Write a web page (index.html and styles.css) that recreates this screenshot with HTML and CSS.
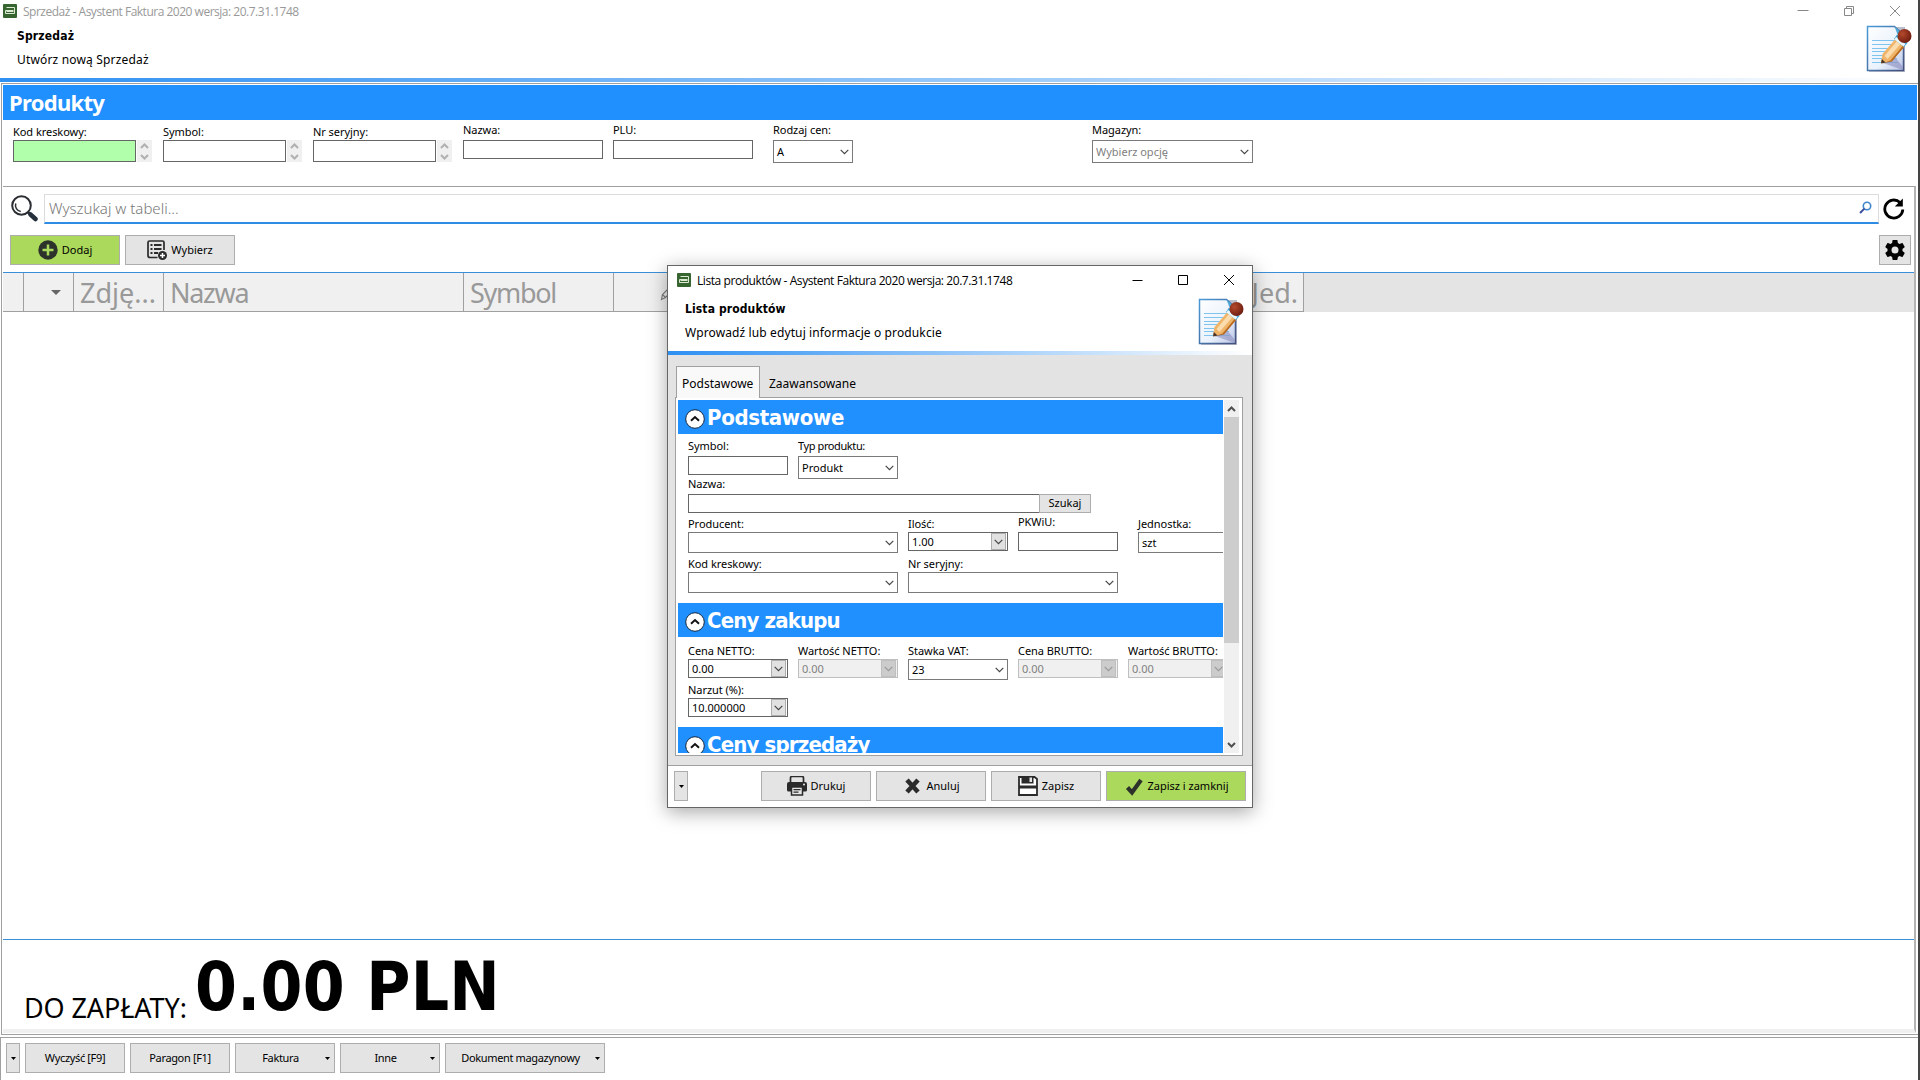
FILE: index.html
```html
<!DOCTYPE html>
<html lang="pl">
<head>
    <meta charset="UTF-8">
    <meta name="viewport" content="width=device-width, initial-scale=1.0">
    <title>Sprzedaż - Asystent Faktura 2020</title>
    <link rel="stylesheet" href="styles.css">
</head>
<body>
    <!-- shared icons -->
    <svg class="sprite" width="0" height="0">
        <defs>
            <linearGradient id="paper" x1="0" y1="0" x2="1" y2="1">
                <stop offset="0" stop-color="#ffffff"/>
                <stop offset="0.6" stop-color="#eaf2fc"/>
                <stop offset="1" stop-color="#b9c4e6"/>
            </linearGradient>
            <linearGradient id="edge" x1="0" y1="0" x2="1" y2="1">
                <stop offset="0" stop-color="#4a9ad8"/>
                <stop offset="1" stop-color="#44507c"/>
            </linearGradient>
            <radialGradient id="rubber" cx="0.35" cy="0.35" r="0.7">
                <stop offset="0" stop-color="#b4492c"/>
                <stop offset="1" stop-color="#6e1d10"/>
            </radialGradient>
        </defs>
        <symbol id="app" viewBox="0 0 14 14">
            <rect width="14" height="14" rx="1" fill="#37652f"/>
            <path d="M3.5 3.5h8v6h-9v-3h8M3.5 7.5h7" fill="none" stroke="#dcead4" stroke-width="1"/>
        </symbol>
        <symbol id="doc" viewBox="0 0 48 48">
            <path d="M3 2h36v45H3z" fill="#8d93ab" opacity="0.6"/>
            <path d="M1.500 1.500h27l9 8v36h-36z" fill="url(#paper)" stroke="url(#edge)" stroke-width="1.500"/>
            <path d="M6 15.500h25M6 19.500h25M6 23.500h24M6 26.500h22M6 30.500h25M6 33.500h25M6 37.500h26" stroke="#7fc4ee" stroke-width="1.200"/>
            <path d="M17 38l12-6 8 10v3z" fill="#8d8fc0" opacity="0.6"/>
            <path d="M28.500 1.500l9 8h-6z" fill="#4fa9d8"/>
            <path d="M15 38l1.500-9L29.500 14l9 7.500L25 36z" fill="#f0b468"/>
            <path d="M18.500 31L31 16l3.500 3-13 15z" fill="#fbdcae"/>
            <path d="M24.500 35.500L37 20.500l1.500 1L26 36.500l-10 2z" fill="#b86a20"/>
            <path d="M15 38.500l0.800-4.500 3.700 3.500z" fill="#4a3426"/>
            <path d="M31 9.500L28 14l10 8 3.500-4z" fill="#3fa6dc"/>
            <path d="M30 12l-1.500 2.500 9 7 2-2.500z" fill="#eaf7fc"/>
            <circle cx="38.500" cy="11" r="7" fill="url(#rubber)"/>
        </symbol>
        <symbol id="chev" viewBox="0 0 9 6">
            <path d="M0.700 0.900L4.500 4.700L8.300 0.900" fill="none" stroke="currentColor" stroke-width="1.200"/>
        </symbol>
        <symbol id="chev-bold" viewBox="0 0 9 6">
            <path d="M1 1L4.500 4.500L8 1" fill="none" stroke="currentColor" stroke-width="2"/>
        </symbol>
        <symbol id="caret" viewBox="0 0 5 3">
            <path d="M0 0h5L2.500 3z" fill="#000"/>
        </symbol>
        <symbol id="up" viewBox="0 0 20 20">
            <circle cx="10" cy="10" r="9.300" fill="#fff" stroke="#12263c" stroke-width="1"/>
            <path d="M6 11.700L10 8l4 3.700" fill="none" stroke="#111" stroke-width="2"/>
        </symbol>
    </svg>

    <div class="window">
        <div class="titlebar">
            <svg class="app-icon"><use href="#app"/></svg>
            <span class="title">Sprzedaż - Asystent Faktura 2020 wersja: 20.7.31.1748</span>
            <div class="win-buttons">
                <svg viewBox="0 0 12 12"><path d="M0.500 5.500h11"/></svg>
                <svg viewBox="0 0 12 12"><path d="M1.500 3.500h7v7h-7zM3.500 3v-1.500h7v7H9"/></svg>
                <svg viewBox="0 0 12 12"><path d="M1 1l10 10M11 1L1 11"/></svg>
            </div>
        </div>
        <div class="header">
            <h1>Sprzedaż</h1>
            <p>Utwórz nową Sprzedaż</p>
            <svg class="doc-icon"><use href="#doc"/></svg>
        </div>
        <div class="line"></div>

        <div class="main">
            <h2 class="banner">Produkty</h2>
            <div class="filters">
                <div class="field low">
                    <label>Kod kreskowy:</label>
                    <div class="spin-row">
                        <div class="box code green"></div>
                        <div class="spinner"><svg class="flip"><use href="#chev-bold"/></svg><svg><use href="#chev-bold"/></svg></div>
                    </div>
                </div>
                <div class="field low">
                    <label>Symbol:</label>
                    <div class="spin-row">
                        <div class="box code"></div>
                        <div class="spinner"><svg class="flip"><use href="#chev-bold"/></svg><svg><use href="#chev-bold"/></svg></div>
                    </div>
                </div>
                <div class="field low">
                    <label>Nr seryjny:</label>
                    <div class="spin-row">
                        <div class="box code"></div>
                        <div class="spinner"><svg class="flip"><use href="#chev-bold"/></svg><svg><use href="#chev-bold"/></svg></div>
                    </div>
                </div>
                <div class="field">
                    <label>Nazwa:</label>
                    <div class="box w140"></div>
                </div>
                <div class="field">
                    <label>PLU:</label>
                    <div class="box w140"></div>
                </div>
                <div class="field price">
                    <label>Rodzaj cen:</label>
                    <div class="box select">A<svg><use href="#chev"/></svg></div>
                </div>
                <div class="field store">
                    <label>Magazyn:</label>
                    <div class="box select muted">Wybierz opcję<svg><use href="#chev"/></svg></div>
                </div>
            </div>

            <div class="grid-panel">
                <div class="search-row">
                    <svg class="lens" viewBox="0 0 27 27">
                        <circle cx="10.500" cy="10.500" r="9.300" fill="none" stroke="#2b2f33" stroke-width="2"/>
                        <path d="M4.800 8.500a6 6 0 0 0 5 8" fill="none" stroke="#2b2f33" stroke-width="1.500"/>
                        <path d="M16.800 17l3 3" stroke="#2b2f33" stroke-width="2.500"/>
                        <path d="M19.500 19.500l5 4.500" stroke="#25303a" stroke-width="4.500" stroke-linecap="round"/>
                    </svg>
                    <div class="search">
                        <span>Wyszukaj w tabeli...</span>
                        <svg viewBox="0 0 13 13">
                            <circle cx="8" cy="5" r="3.700" fill="none" stroke="#3f86cc" stroke-width="1.600"/>
                            <path d="M5.400 7.600L1 12" stroke="#3c4f9c" stroke-width="2"/>
                        </svg>
                    </div>
                    <svg class="refresh" viewBox="0 0 22 22">
                        <path d="M17 4.500A9 9 0 1 0 19.800 11.500" fill="none" stroke="#000" stroke-width="2.800"/>
                        <path d="M19.800 0.500v8h-8z" fill="#000"/>
                    </svg>
                </div>
                <div class="tools">
                    <button class="btn wide green-btn">
                        <svg width="20" height="20" viewBox="0 0 20 20"><circle cx="10" cy="10" r="9.700" fill="#2d332b"/><path d="M10 4.500v11M4.500 10h11" stroke="#a9d95d" stroke-width="2.500"/></svg>
                        <span>Dodaj</span>
                    </button>
                    <button class="btn wide">
                        <svg width="20" height="20" viewBox="0 0 20 20">
                            <path d="M10.500 17.500H3a2 2 0 0 1-2-2V2.500a1.500 1.500 0 0 1 1.500-1.500h13a1.500 1.500 0 0 1 1.500 1.500V10" fill="none" stroke="#2b2b2b" stroke-width="1.700"/>
                            <path d="M3.500 5h2M3.500 9h2M3.500 13h2M7 5h7.500M7 9h7.500M7 13h4" stroke="#2b2b2b" stroke-width="2"/>
                            <circle cx="15.500" cy="15.500" r="4.500" fill="#2b2b2b"/>
                            <path d="M15.500 13v5M13 15.500h5" stroke="#fff" stroke-width="1.500"/>
                        </svg>
                        <span>Wybierz</span>
                    </button>
                    <button class="btn gear">
                        <svg width="20" height="20" viewBox="2 2 20 20"><path d="M19.430 12.980c.04-.32.07-.64.07-.98s-.03-.66-.07-.98l2.110-1.650c.19-.15.24-.42.12-.64l-2-3.460c-.12-.22-.39-.3-.61-.22l-2.490 1c-.52-.4-1.080-.73-1.690-.98l-.38-2.650C14.460 2.180 14.250 2 14 2h-4c-.25 0-.46.18-.49.42l-.38 2.650c-.61.25-1.170.59-1.690.98l-2.490-1c-.23-.09-.49 0-.61.22l-2 3.460c-.13.22-.07.49.12.64l2.110 1.650c-.04.32-.07.65-.07.98s.03.66.07.98l-2.110 1.650c-.19.15-.24.42-.12.64l2 3.460c.12.22.39.3.61.22l2.490-1c.52.4 1.080.73 1.690.98l.38 2.650c.03.24.24.42.49.42h4c.25 0 .46-.18.49-.42l.38-2.650c.61-.25 1.170-.59 1.690-.98l2.490 1c.23.09.49 0 .61-.22l2-3.460c.12-.22.07-.49-.12-.64zM12 15.500a3.500 3.500 0 1 1 0-7 3.500 3.500 0 0 1 0 7z"/></svg>
                    </button>
                </div>
                <div class="thead">
                    <div class="th c0"></div>
                    <div class="th c1"><i></i></div>
                    <div class="th c2">Zdję...</div>
                    <div class="th c3">Nazwa</div>
                    <div class="th c4">Symbol</div>
                    <div class="th c5"><svg width="14" height="14" viewBox="0 0 14 14"><path d="M1.500 12.500l1-5 6-6 3 3-6 6zM2.500 7.500l3 3" fill="none" stroke="#808080" stroke-width="1.200"/></svg></div>
                    <div class="th c6">Jed.</div>
                </div>
                <div class="tbody"></div>
                <div class="total">
                    <span class="total-label">DO ZAPŁATY:</span>
                    <span class="total-value">0.00 PLN</span>
                </div>
            </div>
        </div>

        <div class="actions">
            <button class="btn more"><svg width="5" height="3"><use href="#caret"/></svg></button>
            <button class="btn"><span>Wyczyść [F9]</span></button>
            <button class="btn"><span>Paragon [F1]</span></button>
            <button class="btn drop"><span>Faktura</span><svg width="5" height="3"><use href="#caret"/></svg></button>
            <button class="btn drop"><span>Inne</span><svg width="5" height="3"><use href="#caret"/></svg></button>
            <button class="btn drop long"><span>Dokument magazynowy</span><svg width="5" height="3"><use href="#caret"/></svg></button>
        </div>
    </div>

    <div class="dialog">
        <div class="titlebar">
            <svg class="app-icon"><use href="#app"/></svg>
            <span class="title">Lista produktów - Asystent Faktura 2020 wersja: 20.7.31.1748</span>
            <div class="win-buttons">
                <svg viewBox="0 0 12 12"><path d="M1.500 6.500h10"/></svg>
                <svg viewBox="0 0 12 12"><path d="M1.500 1.500h9v9h-9z"/></svg>
                <svg viewBox="0 0 12 12"><path d="M1 1l10 10M11 1L1 11"/></svg>
            </div>
        </div>
        <div class="header">
            <h1>Lista produktów</h1>
            <p>Wprowadź lub edytuj informacje o produkcie</p>
            <svg class="doc-icon"><use href="#doc"/></svg>
        </div>
        <div class="line"></div>

        <div class="dialog-body">
            <div class="tabs">
                <div class="tab active">Podstawowe</div>
                <div class="tab">Zaawansowane</div>
            </div>
            <div class="pane">
                <div class="form">
                    <h2 class="section"><svg><use href="#up"/></svg>Podstawowe</h2>
                    <div class="row r1">
                        <div class="field"><label>Symbol:</label><div class="box"></div></div>
                        <div class="field type"><label>Typ produktu:</label><div class="box select tall">Produkt<svg><use href="#chev"/></svg></div></div>
                    </div>
                    <div class="row r2">
                        <div class="field name"><label>Nazwa:</label><div class="box"></div></div>
                        <button class="btn find"><span>Szukaj</span></button>
                    </div>
                    <div class="row r3">
                        <div class="field low w210"><label>Producent:</label><div class="box select"><svg><use href="#chev"/></svg></div></div>
                        <div class="field low"><label>Ilość:</label><div class="box calc">1.00<b><svg><use href="#chev"/></svg></b></div></div>
                        <div class="field"><label>PKWiU:</label><div class="box"></div></div>
                        <div class="field low unit"><label>Jednostka:</label><div class="box select">szt</div></div>
                    </div>
                    <div class="row r4">
                        <div class="field low w210"><label>Kod kreskowy:</label><div class="box select"><svg><use href="#chev"/></svg></div></div>
                        <div class="field low w210"><label>Nr seryjny:</label><div class="box select"><svg><use href="#chev"/></svg></div></div>
                    </div>
                    <h2 class="section narrow"><svg><use href="#up"/></svg>Ceny zakupu</h2>
                    <div class="row r5">
                        <div class="field low"><label>Cena NETTO:</label><div class="box calc">0.00<b><svg><use href="#chev"/></svg></b></div></div>
                        <div class="field low"><label>Wartość NETTO:</label><div class="box calc off">0.00<b><svg><use href="#chev"/></svg></b></div></div>
                        <div class="field low"><label>Stawka VAT:</label><div class="box select">23<svg><use href="#chev"/></svg></div></div>
                        <div class="field low"><label>Cena BRUTTO:</label><div class="box calc off">0.00<b><svg><use href="#chev"/></svg></b></div></div>
                        <div class="field low"><label>Wartość BRUTTO:</label><div class="box calc off">0.00<b><svg><use href="#chev"/></svg></b></div></div>
                    </div>
                    <div class="row r6">
                        <div class="field low"><label>Narzut (%):</label><div class="box calc">10.000000<b><svg><use href="#chev"/></svg></b></div></div>
                    </div>
                    <h2 class="section narrow"><svg><use href="#up"/></svg>Ceny sprzedaży</h2>
                </div>
                <div class="scrollbar">
                    <svg class="flip"><use href="#chev-bold"/></svg>
                    <div class="thumb"></div>
                    <svg><use href="#chev-bold"/></svg>
                </div>
            </div>
        </div>

        <div class="dialog-footer">
            <button class="btn more"><svg width="5" height="3"><use href="#caret"/></svg></button>
            <button class="btn wide first">
                <svg width="20" height="20" viewBox="0 0 20 20">
                    <path d="M3.500 6V2a1.500 1.500 0 0 1 1.500-1.500h10a1.500 1.500 0 0 1 1.500 1.500v4" fill="none" stroke="#2b2b2b" stroke-width="1.700"/>
                    <path d="M2 6h16a2 2 0 0 1 2 2v6a1.500 1.500 0 0 1-1.500 1.500h-17A1.500 1.500 0 0 1 0 14V8a2 2 0 0 1 2-2z" fill="#2b2b2b"/>
                    <path d="M4.500 11h11v8h-11z" fill="#e6e6e6" stroke="#2b2b2b" stroke-width="1.500"/>
                    <path d="M6.500 13.700h7M6.500 16.200h5" stroke="#2b2b2b" stroke-width="1.200"/>
                    <circle cx="17" cy="8.500" r="0.900" fill="#fff"/>
                </svg>
                <span>Drukuj</span>
            </button>
            <button class="btn wide">
                <svg width="20" height="20" viewBox="0 0 20 20"><path d="M5 4l11 12M16 4l-11 12" stroke="#2b2b2b" stroke-width="4.600"/></svg>
                <span>Anuluj</span>
            </button>
            <button class="btn wide">
                <svg width="20" height="20" viewBox="0 0 20 20">
                    <path d="M1 1h15.500L19 3v16H1z" fill="#fff" stroke="#2b2b2b" stroke-width="1.800"/>
                    <path d="M3.500 0.500h12v7h-12zM1 9.500h18v3H1z" fill="#2b2b2b"/>
                    <path d="M11.500 1.500h2.500v4.500h-2.500z" fill="#e6e6e6"/>
                </svg>
                <span>Zapisz</span>
            </button>
            <button class="btn save green-btn">
                <svg width="20" height="20" viewBox="0 0 20 20"><path d="M4.500 11.500l4.500 5L18 4" fill="none" stroke="#2d332b" stroke-width="4.200"/></svg>
                <span>Zapisz i zamknij</span>
            </button>
        </div>
    </div>
</body>
</html>
```

FILE: styles.css
```css
* {
    box-sizing: border-box;
}

body {
    margin: 0;
    height: 1080px;
    background-color: #444;
    font-family: "Noto Sans", "Open Sans", sans-serif;
    font-size: 11px;
    color: #000;
    overflow: hidden;
}

h1, h2, p {
    margin: 0;
}

svg {
    display: block;
    flex: none;
}

.sprite {
    position: absolute;
}

.flip {
    transform: rotate(180deg);
}

.window {
    width: 1918px;
    height: 1080px;
    background-color: #fff;
    display: flex;
    flex-direction: column;
}

/* title bars */
.titlebar {
    display: flex;
    align-items: center;
    height: 22px;
    padding-left: 3px;
    color: #999;
    font-family: "Open Sans", "Noto Sans", sans-serif;
    font-size: 12px;
}

.app-icon {
    width: 14px;
    height: 14px;
    margin-right: 6px;
}

.title {
    letter-spacing: -0.49px;
}

.win-buttons {
    display: flex;
    gap: 34px;
    margin-left: auto;
    margin-right: 17px;
}

.win-buttons svg {
    width: 12px;
    height: 12px;
    fill: none;
    stroke: #888;
    stroke-width: 1;
}

.header {
    display: grid;
    grid-template-columns: 1fr 48px;
    grid-template-rows: 24px 22px;
    align-items: center;
    height: 56px;
    padding: 2px 4px 0 17px;
    font-size: 12px;
    letter-spacing: 0.17px;
}

.header h1 {
    font-family: "DejaVu Sans Condensed", "DejaVu Sans", sans-serif;
    font-stretch: condensed;
    font-size: 12px;
}

.header .doc-icon {
    width: 48px;
    height: 48px;
    margin-top: 3px;
    grid-column: 2;
    grid-row: 1 / 3;
}

.line {
    height: 4px;
    background: linear-gradient(to right, #2e90f2, #ffffff);
}

/* product panel */
.main {
    flex: 1;
    display: flex;
    flex-direction: column;
    margin: 1px 0 0 1px;
    border: 1px solid #a0a0a0;
    border-right: 0;
    padding: 1px;
}

.banner {
    height: 35px;
    padding-left: 6px;
    background-color: #2190ff;
    color: #fff;
    font-size: 22px;
    line-height: 35px;
    letter-spacing: -0.7px;
}

.filters {
    display: flex;
    height: 66px;
    padding: 3px 0 0 10px;
}

.field label {
    display: block;
    height: 14px;
    line-height: 14px;
    margin-bottom: 3px;
    letter-spacing: -0.05px;
    white-space: nowrap;
}

.field.low label {
    padding-top: 2px;
    height: 16px;
    margin-bottom: 1px;
}

.box {
    height: 19px;
    border: 1px solid #666;
    background-color: #fff;
}

.code {
    width: 123px;
    height: 22px;
}

.green {
    background-color: #b2ffab;
}

.spin-row {
    display: flex;
    gap: 1px;
    width: 150px;
}

.spinner {
    display: flex;
    flex-direction: column;
    align-items: center;
    justify-content: space-around;
    width: 15px;
    height: 22px;
    background-color: #f0f0f0;
    color: #b0b0b0;
}

.spinner svg {
    width: 9px;
    height: 6px;
}

.w140 {
    width: 140px;
    margin-right: 10px;
}

.select {
    display: flex;
    align-items: center;
    justify-content: space-between;
    height: 21px;
    padding: 0 3px;
    border-color: #7a7a7a;
}

.select svg {
    width: 9px;
    height: 6px;
    margin-left: auto;
    color: #444;
}

.filters .select {
    height: 23px;
}

.price {
    width: 80px;
    margin-left: 10px;
}

.store {
    width: 161px;
    margin-left: 239px;
}

.muted {
    color: #808080;
}

.grid-panel {
    flex: 1;
    display: flex;
    flex-direction: column;
    margin-right: 1px;
    border-top: 1px solid #a0a0a0;
    border-right: 2px solid #b4b4b4;
    border-bottom: 4px solid #f0f0f0;
}

.search-row {
    display: flex;
    padding: 7px 9px 0 8px;
}

.lens {
    width: 27px;
    height: 27px;
    margin: 1px 6px 0 0;
}

.search {
    flex: 1;
    display: flex;
    align-items: center;
    justify-content: space-between;
    height: 30px;
    padding: 0 6px 2px 4px;
    border: 1px solid #dcdcdc;
    border-bottom: 2px solid #2f8ce4;
    color: #777;
    font-size: 15px;
    font-weight: 300;
}

.search svg {
    width: 13px;
    height: 13px;
}

.refresh {
    width: 22px;
    height: 22px;
    margin: 4px 0 0 4px;
}

.tools {
    display: flex;
    gap: 5px;
    padding: 11px 3px 7px 7px;
}

.btn {
    display: flex;
    align-items: center;
    justify-content: center;
    width: 100px;
    height: 30px;
    padding: 0;
    border: 1px solid #adadad;
    background-color: #e4e4e4;
    font-family: inherit;
    font-size: 11px;
    color: #000;
    white-space: nowrap;
}

.btn span {
    padding-bottom: 2px;
}

.wide {
    width: 110px;
    gap: 4px;
}

.green-btn {
    background-color: #abd95c;
}

.gear {
    width: 32px;
    margin-left: auto;
}

.thead {
    display: flex;
    height: 40px;
    border-top: 1px solid #3b8fd8;
    background-color: #e4e4e4;
}

.th {
    border-right: 1px solid #a0a0a0;
    border-bottom: 1px solid #a0a0a0;
    background-color: #f0f0f0;
    color: #999;
    padding-left: 6px;
    font-size: 27px;
    line-height: 40px;
    letter-spacing: -1.3px;
    white-space: nowrap;
    overflow: hidden;
}

.c0 { width: 21px; }
.c1 { width: 50px; }
.c2 { width: 90px; letter-spacing: 0; }
.c3 { width: 300px; }
.c4 { width: 150px; }
.c5 { width: 90px; }
.c6 { width: 600px; text-align: right; padding-right: 5px; letter-spacing: 0; }

.c1 i {
    display: block;
    width: 0;
    margin: 17px 0 0 21px;
    border: 5px solid transparent;
    border-top-color: #666;
    border-bottom: 0;
}

.c5 svg {
    margin: 14px 0 0 40px;
}

.tbody {
    flex: 1;
}

.total {
    display: flex;
    align-items: flex-start;
    height: 90px;
    padding-left: 21px;
    border-top: 1px solid #3b8fd8;
}

.total-label {
    width: 171px;
    margin-top: 49px;
    font-size: 27px;
    line-height: 37px;
    letter-spacing: -0.1px;
    white-space: nowrap;
}

.total-value {
    margin-top: 8px;
    font-family: "DejaVu Sans Condensed", "DejaVu Sans", sans-serif;
    font-stretch: condensed;
    font-weight: bold;
    font-size: 67px;
    line-height: 78px;
    letter-spacing: 0.3px;
}

.actions {
    display: flex;
    gap: 5px;
    height: 43px;
    padding: 5px 0 0 5px;
    border-top: 1px solid #a0a0a0;
    border-left: 1px solid #a0a0a0;
    margin-top: 2px;
    letter-spacing: -0.35px;
}

.actions .btn {
    letter-spacing: -0.35px;
}

.more {
    width: 14px;
}

.actions .more {
    width: 14px;
}

.drop {
    padding-right: 4px;
}

.drop span {
    flex: 1;
}

.actions .long {
    width: 160px;
}

/* product dialog */
.dialog {
    position: absolute;
    left: 667px;
    top: 265px;
    width: 586px;
    height: 543px;
    border: 1px solid #666;
    background-color: #fff;
    box-shadow: 0 4px 18px rgba(0, 0, 0, 0.35);
    display: flex;
    flex-direction: column;
}

.dialog .titlebar {
    height: 30px;
    padding: 0 0 2px 9px;
    color: #000;
}

.dialog .title {
    letter-spacing: -0.43px;
}

.dialog .win-buttons svg {
    stroke: #000;
}

.dialog .header {
    height: 55px;
    padding: 1px 6px 0 17px;
    letter-spacing: 0.12px;
}

.dialog-body {
    height: 410px;
    padding: 11px 9px 0 7px;
    background-color: #e3e3e3;
}

.tabs {
    display: flex;
    height: 31px;
    padding-left: 1px;
    font-size: 12px;
}

.tab {
    height: 31px;
    padding: 0 9px;
    line-height: 36px;
}

.tab.active {
    width: 84px;
    height: 32px;
    padding: 0 5px;
    border: 1px solid #a0a0a0;
    border-bottom: 0;
    background-color: #f9f9f9;
    line-height: 34px;
    z-index: 1;
}

.pane {
    display: flex;
    gap: 1px;
    height: 359px;
    padding: 2px 3px 2px 2px;
    border: 1px solid #a0a0a0;
    background-color: #fff;
}

.form {
    width: 545px;
    overflow: hidden;
}

.section {
    display: flex;
    align-items: center;
    gap: 2px;
    height: 34px;
    padding-left: 7px;
    background-color: #2190ff;
    color: #fff;
    font-family: "DejaVu Sans Condensed", "DejaVu Sans", sans-serif;
    font-stretch: condensed;
    font-size: 22px;
    letter-spacing: -0.35px;
}

.narrow {
    letter-spacing: -0.85px;
}

.section svg {
    width: 20px;
    height: 20px;
    margin-top: 4px;
}

.row {
    display: flex;
    gap: 10px;
    padding-left: 10px;
}

.row .field {
    flex: none;
    width: 100px;
}

.row .w210 {
    width: 210px;
}

.row .name {
    width: 352px;
}

.row .unit {
    margin-left: 10px;
}

.row .type label {
    letter-spacing: -0.4px;
}

.r1 { height: 43px; padding-top: 5px; }
.r2 { height: 38px; gap: 0; }
.r3 { height: 40px; }
.r4 { height: 48px; }
.r5 { height: 46px; padding-top: 5px; }
.r6 { height: 44px; }

.r6 .field.low label {
    height: 14px;
    padding-top: 0;
}

.tall {
    height: 23px;
}

.find {
    width: 52px;
    height: 19px;
    margin: 17px 0 0 -1px;
}

.calc {
    display: flex;
    align-items: center;
    justify-content: space-between;
    padding: 0 1px 0 3px;
}

.calc b {
    display: flex;
    align-items: center;
    justify-content: center;
    width: 15px;
    height: 17px;
    border: 1px solid #adadad;
    background-color: #e1e1e1;
    color: #444;
}

.calc svg {
    width: 9px;
    height: 6px;
}

.off {
    border-color: #bfbfbf;
    background-color: #f0f0f0;
    color: #808080;
}

.off b {
    background-color: #ccc;
    border-color: #bfbfbf;
    color: #999;
}

.scrollbar {
    display: flex;
    flex-direction: column;
    align-items: center;
    width: 15px;
    background-color: #f0f0f0;
    color: #505050;
}

.scrollbar svg {
    width: 9px;
    height: 6px;
    margin: 6px 0 5px;
}

.thumb {
    width: 15px;
    height: 226px;
    margin-bottom: auto;
    background-color: #cdcdcd;
}

.dialog-footer {
    flex: 1;
    display: flex;
    gap: 5px;
    padding: 5px 0 0 6px;
    border-top: 1px solid #a0a0a0;
}

.first {
    margin-left: 68px;
}

.save {
    width: 140px;
    gap: 4px;
}
```
